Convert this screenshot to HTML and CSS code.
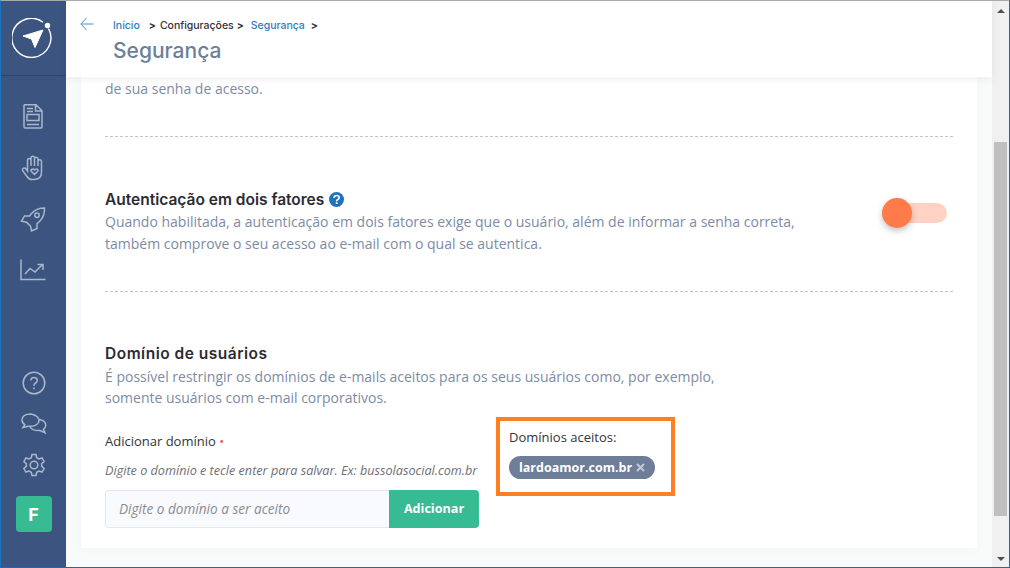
FILE: index.html
```html
<!doctype html>
<html lang="pt-BR">
<head>
    <meta charset="utf-8">
    <title>Segurança</title>
    <link rel="stylesheet" href="styles.css">
</head>
<body>
<div class="window">
    <nav class="sidebar">
        <div class="logo">
            <svg width="42" height="42" viewBox="0 0 42 42" fill="none">
                <path d="M36.5 10.5A19.5 19.5 0 1 1 31 4.2" stroke="#fff" stroke-width="1.4"/>
                <circle cx="35.500" cy="7.500" r="2.700" fill="#fff"/>
                <path d="M11 18 31 12 23 29.500 19.500 21Z" fill="#fff" stroke="#fff" stroke-linejoin="round"/>
            </svg>
        </div>
        <div class="nav-top">
            <svg class="nav-icon" width="20" height="25" viewBox="0 0 20 25">
                <path d="M1.500 .8H13L19 6.800V23Q19 24 18 24H2Q1 24 1 23V1.500ZM12.500 .8V7H19M4 4.500H10M4 7.500H10M4 20.500H16M4 10.500H16V16.500H4Z"/>
            </svg>
            <svg class="nav-icon" width="24" height="26" viewBox="0 0 24 26">
                <path d="M6.500 16V5.500Q6.500 3.500 8.200 3.500T10 5.500V3Q10 1.200 11.800 1.200T13.500 3V3.500Q13.700 2.200 15.300 2.200T17 4V6Q17.300 4.700 18.800 4.700T20.500 6.500V17Q20.500 24.500 13 24.500H11Q8 24.500 6 21.500L1.500 15.500Q1 14 2.500 13.200T5 14ZM10 5.500V11M13.500 3.500V11M17 6V11"/>
                <path d="M13.500 19.500 10.300 16.300Q9.500 15 10.500 14.300T13 14.500L13.500 15 14 14.500Q15.500 13.500 16.500 14.300T16.700 16.300Z"/>
            </svg>
            <svg class="nav-icon" width="26" height="26" viewBox="0 0 26 26">
                <path d="M24.500 1Q24.800 9.500 19.500 14.500L17 16.700V21.500L11.500 24 10.500 19 6.700 15.200 1.500 14.200 4.500 9H9.500L11.500 6.500Q16.500 1 24.500 1ZM10.500 19 6.500 15.500"/>
                <circle cx="17" cy="8.300" r="2.200"/>
            </svg>
            <svg class="nav-icon" width="26" height="22" viewBox="0 0 26 22">
                <path d="M1 0.500V20.500H25.500M5 15 10 9.500 15 13 22 6M17.500 5.500H23V11"/>
            </svg>
        </div>
        <div class="nav-bottom">
            <svg class="nav-icon" width="24" height="24" viewBox="0 0 24 24">
                <circle cx="12" cy="12" r="10.800"/>
                <path d="M8.800 9.500Q9 6.500 12 6.500T15.300 9.300Q15.300 11 13.500 12T12 14.800M12 16.500V18.300"/>
            </svg>
            <svg class="nav-icon" width="26" height="22" viewBox="0 0 26 22">
                <path d="M10 1Q1.200 1 1 7Q1 10 3.800 11.700L2 14.500 7 13.200Q15 14 17.500 9.500Q19.500 3 10 1ZM18.500 6.500Q25 8 24.800 12.500Q24.500 15 22.500 16.200L24 19.800 19 17.500Q11 18 8.800 13.500"/>
            </svg>
            <svg class="nav-icon" width="24" height="24" viewBox="0 0 24 24">
                <circle cx="12" cy="12" r="3.800"/>
                <path d="M10 1.500H14L14.700 4.700 17 6 20.100 5 22.100 8.500 19.700 10.700V13.300L22.100 15.500 20.100 19 17 18 14.700 19.300 14 22.500H10L9.300 19.300 7 18 3.900 19 1.900 15.500 4.300 13.300V10.700L1.900 8.500 3.900 5 7 6 9.300 4.700Z"/>
            </svg>
            <div class="avatar">F</div>
        </div>
    </nav>
    <div class="page">
        <header class="topbar">
            <svg class="back" width="14" height="14" viewBox="0 0 14 14" fill="none">
                <path d="M13.500 7H1M6.500 1 .8 7 6.500 13" stroke="#4a90d0" stroke-width="1"/>
            </svg>
            <div class="topbar-text">
                <div class="crumbs">
                    <span class="crumb-link">Início</span><span class="sep">&gt;</span><span class="crumb">Configurações</span><span class="sep sep-tight">&gt;</span><span class="crumb-link">Segurança</span><span class="sep sep-last">&gt;</span>
                </div>
                <h1 class="page-title">Segurança</h1>
            </div>
        </header>
        <main class="scroller">
            <div class="card">
                <p class="text">de sua senha de acesso.</p>
                <hr class="divider first">
                <section class="two-factor">
                    <div>
                        <h2 class="heading">Autenticação em dois fatores
                            <svg class="help" width="15" height="15" viewBox="0 0 15 15">
                                <circle cx="7.500" cy="7.500" r="7.500" fill="#1f72c0"/>
                                <path d="M5 5.800Q5.200 3.500 7.600 3.500T10.200 5.600Q10.200 6.900 8.800 7.600T7.700 9.200" fill="none" stroke="#fff" stroke-width="1.700"/>
                                <rect x="6.800" y="10.200" width="1.800" height="1.800" fill="#fff"/>
                            </svg>
                        </h2>
                        <p class="text">Quando habilitada, a autenticação em dois fatores exige que o usuário, além de informar a senha correta,<br>também comprove o seu acesso ao e-mail com o qual se autentica.</p>
                    </div>
                    <div class="toggle"><span class="knob"></span></div>
                </section>
                <hr class="divider second">
                <section class="domains">
                    <h2 class="heading">Domínio de usuários</h2>
                    <p class="text">É possível restringir os domínios de e-mails aceitos para os seus usuários como, por exemplo,<br>somente usuários com e-mail corporativos.</p>
                    <div class="domain-row">
                        <div class="domain-form">
                            <label class="label">Adicionar domínio <span class="required">•</span></label>
                            <p class="hint">Digite o domínio e tecle enter para salvar. Ex: bussolasocial.com.br</p>
                            <div class="input-group">
                                <div class="input">Digite o domínio a ser aceito</div>
                                <div class="add-btn">Adicionar</div>
                            </div>
                        </div>
                        <div class="accepted">
                            <div class="accepted-title">Domínios aceitos:</div>
                            <span class="chip">lardoamor.com.br
                                <svg class="chip-x" width="9" height="9" viewBox="0 0 9 9">
                                    <path d="M1 1 8 8M8 1 1 8" stroke="#c3cad6" stroke-width="2"/>
                                </svg>
                            </span>
                        </div>
                    </div>
                </section>
            </div>
        </main>
    </div>
    <div class="scrollbar">
        <span class="arrow-up"></span>
        <div class="track"><div class="thumb"></div></div>
        <span class="arrow-down"></span>
    </div>
</div>
</body>
</html>
```
FILE: styles.css
```css
* {
    box-sizing: border-box;
}
html, body {
    margin: 0;
    height: 100%;
    overflow: hidden;
}
body {
    font-family: "Open Sans", "Liberation Sans", sans-serif;
    color: #2d2d35;
}
.window {
    display: flex;
    width: 1010px;
    height: 568px;
    border-top: 1px solid #a9a9ad;
    border-left: 1px solid #1b74bd;
    border-right: 1px solid #1f6aa8;
    border-bottom: 1px solid #1f6aa8;
    overflow: hidden;
}

/* Sidebar */
.sidebar {
    width: 65px;
    flex: none;
    background: #3b5580;
    display: flex;
    flex-direction: column;
    align-items: center;
}
.logo {
    width: 100%;
    height: 75px;
    border-bottom: 1px solid #2f4568;
    display: flex;
    align-items: center;
    justify-content: center;
    padding: 2px 2px 0 0;
}
.nav-top {
    display: flex;
    flex-direction: column;
    align-items: center;
    gap: 26px;
    margin-top: 28px;
    padding-right: 2px;
}
.nav-bottom {
    margin-top: auto;
    display: flex;
    flex-direction: column;
    align-items: center;
    gap: 18px;
    padding-bottom: 35px;
}
.nav-icon {
    fill: none;
    stroke: #aab6c9;
    stroke-width: 1.500;
}
.avatar {
    width: 36px;
    height: 36px;
    border-radius: 4px;
    background: #37bb92;
    color: #fff;
    font-family: "Inter", sans-serif;
    font-weight: 700;
    font-size: 18px;
    display: flex;
    align-items: center;
    justify-content: center;
    margin-top: 1px;
}

/* Top bar */
.page {
    flex: 1;
    display: flex;
    flex-direction: column;
    min-width: 0;
    background: #f9fafa;
}
.topbar {
    height: 76px;
    flex: none;
    background: #fff;
    display: flex;
    padding: 16px 0 0 14px;
    gap: 19px;
    box-shadow: 0 2px 8px rgba(60, 70, 90, 0.08);
    position: relative;
    z-index: 1;
}
.back {
    margin-top: 0;
}
.crumbs {
    font-size: 10.500px;
    font-weight: 500;
    line-height: 18px;
    font-family: "Inter", sans-serif;
    letter-spacing: -0.02px;
}
.crumb-link {
    color: #2f7dbd;
}
.crumb {
    color: #33333a;
}
.sep {
    margin: 0 4px 0 9px;
    font-weight: 700;
    color: #33333a;
}
.sep-tight {
    margin: 0 7px 0 3px;
}
.sep-last {
    margin: 0 0 0 6px;
}
.page-title {
    margin: 3px 0 0;
    font-family: "Inter", sans-serif;
    font-weight: 500;
    font-size: 21px;
    line-height: 26px;
    color: #6d7f99;
}

/* Card */
.scroller {
    flex: 1;
    min-height: 0;
    padding: 0 15px;
    overflow: hidden;
}
.card {
    background: #fff;
    height: 471px;
    padding: 1px 24px 0;
    box-shadow: 0 0 10px rgba(60, 70, 90, 0.03);
}
.text {
    margin: 0;
    font-size: 14px;
    line-height: 22px;
    color: #7d8ba5;
}
.divider {
    margin: 0;
    border: 0;
    border-top: 1px dashed #bcc6d6;
}
.divider.first {
    margin-top: 36px;
}
.divider.second {
    margin-top: 36px;
}
.two-factor {
    display: flex;
    justify-content: space-between;
    padding-top: 53px;
}
.heading {
    margin: 0 0 1px;
    font-family: "Inter", sans-serif;
    font-size: 15.500px;
    font-weight: 600;
    line-height: 20px;
    color: #2b2b33;
}
.help {
    vertical-align: -2px;
    margin-left: 1px;
}
.toggle {
    width: 65px;
    height: 20px;
    margin: 13px 6px 0 0;
    background: #ffd2c3;
    border-radius: 10px;
    position: relative;
}
.knob {
    position: absolute;
    left: 0;
    top: -5px;
    width: 30px;
    height: 30px;
    border-radius: 50%;
    background: #ff7b4a;
    box-shadow: 0 3px 6px rgba(60, 60, 60, 0.3);
}
.domains {
    padding-top: 52px;
}
.domains .heading {
    margin-bottom: 2px;
    letter-spacing: 0.5px;
}
.domains .text {
    line-height: 21px;
}
.domain-row {
    display: flex;
    align-items: flex-start;
    margin-top: 13px;
}
.domain-form {
    width: 374px;
    padding-top: 11px;
}
.label {
    display: block;
    font-size: 13px;
    line-height: 18px;
    color: #33333a;
}
.required {
    color: #e8575f;
}
.hint {
    margin: 12px 0 0;
    font-size: 12.650px;
    line-height: 16px;
    font-style: italic;
    color: #6f6f76;
    white-space: nowrap;
}
.input-group {
    display: flex;
    height: 38px;
    margin-top: 12px;
}
.input {
    flex: 1;
    background: #f8fafd;
    border: 1px solid #e2e8f1;
    border-right: 0;
    border-radius: 4px 0 0 4px;
    padding-left: 13px;
    font-size: 13.600px;
    font-style: italic;
    line-height: 36px;
    color: #8c8c93;
}
.add-btn {
    width: 90px;
    background: #37bb92;
    border-radius: 0 4px 4px 0;
    color: #fff;
    font-size: 12.600px;
    font-weight: 700;
    line-height: 38px;
    text-align: center;
}
.accepted {
    width: 179px;
    height: 79px;
    margin: -4px 0 0 17px;
    border: 4px solid #ff8024;
    padding: 7px 0 0 9px;
}
.accepted-title {
    font-size: 13px;
    line-height: 18px;
    color: #33333a;
}
.chip {
    display: inline-flex;
    align-items: center;
    gap: 4px;
    margin-top: 10px;
    height: 23px;
    padding: 0 10px 0 10px;
    border-radius: 12px;
    background: #6e7d98;
    color: #fff;
    font-size: 12.500px;
    font-weight: 700;
    white-space: nowrap;
}

/* Scrollbar */
.scrollbar {
    width: 17px;
    flex: none;
    background: #f0f0f0;
    display: flex;
    flex-direction: column;
    align-items: center;
    padding: 8px 0 6px;
}
.track {
    flex: 1;
    width: 100%;
    padding: 129px 2px 0;
}
.thumb {
    height: 374px;
    background: #c0c0c0;
}
.arrow-up {
    width: 0;
    height: 0;
    border: 4px solid transparent;
    border-top: 0;
    border-bottom: 4px solid #505050;
}
.arrow-down {
    width: 0;
    height: 0;
    border: 4px solid transparent;
    border-bottom: 0;
    border-top: 4px solid #505050;
}
```
